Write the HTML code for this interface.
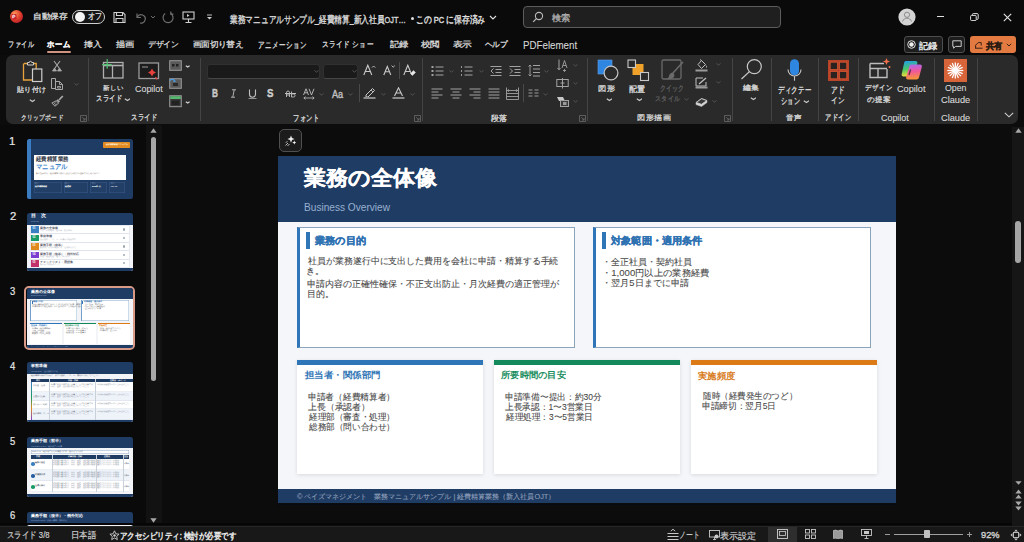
<!DOCTYPE html>
<html lang="ja"><head><meta charset="utf-8">
<style>
*{margin:0;padding:0;box-sizing:border-box}
html,body{width:1024px;height:542px;overflow:hidden;background:#0c0c0c;font-family:"Liberation Sans",sans-serif}
.a{position:absolute}
.m{position:absolute;white-space:nowrap;line-height:1;transform-origin:0 0}
</style></head><body>

<div class="a" style="left:0px;top:0px;width:1024px;height:55px;background:#0a0a0a;"></div>
<div class="a" style="left:0px;top:55px;width:1024px;height:472px;background:#0c0c0c;"></div>
<svg class="a" style="left:9px;top:9px" width="15" height="15" viewBox="0 0 15 15" fill="none"><defs><radialGradient id="pg" cx="0.35" cy="0.3" r="0.8"><stop offset="0" stop-color="#ff9a5a"/><stop offset="0.55" stop-color="#e0402a"/><stop offset="1" stop-color="#b0182a"/></radialGradient></defs>
<circle cx="7.5" cy="7.5" r="6.5" fill="url(#pg)"/><rect x="2.5" y="5" width="5" height="5.5" rx="0.8" fill="#c8202a"/><path d="M3.8 9.3V6.2h1.3a0.9 0.9 0 0 1 0 1.8H3.8" stroke="#fff" stroke-width="0.9"/></svg>
<div class="m" style="left:32.65px;top:13.30px;color:#d6d6d6;font-size:9px;font-weight:400;-webkit-text-stroke:0.38px #d6d6d6;transform:scale(0.9529,0.8750);">自動保存</div>
<div class="a" style="left:72px;top:9.5px;width:33px;height:14px;border:1.3px solid #cfcfcf;border-radius:7px;background:#151515"></div>
<div class="a" style="left:74.5px;top:11.5px;width:10px;height:10px;border-radius:50%;background:#f4f4f4"></div>
<div class="m" style="left:88.21px;top:12.30px;color:#d6d6d6;font-size:9px;font-weight:400;-webkit-text-stroke:0.38px #d6d6d6;transform:scaleX(0.7875);">オフ</div>
<svg class="a" style="left:113px;top:11px" width="13" height="13" viewBox="0 0 13 13" fill="none"><path d="M1 1.5h9l2 2v8H1z" stroke="#cfcfcf" stroke-width="1.1"/><path d="M3.5 1.5v3h6v-3M3 11.5V7.5h7v4" stroke="#cfcfcf" stroke-width="1.1"/></svg>
<svg class="a" style="left:134px;top:11px" width="12" height="13" viewBox="0 0 12 13" fill="none"><path d="M3 2.5v4h4" stroke="#6e6e6e" stroke-width="1.2"/><path d="M3.2 6.2A4.2 4.2 0 1 1 6 12" stroke="#6e6e6e" stroke-width="1.2"/></svg>
<svg class="a" style="left:149.5px;top:15px" width="6" height="4" viewBox="0 0 6 4" fill="none"><path d="M1 1l2 2 2-2" stroke="#6e6e6e" stroke-width="1"/></svg>
<svg class="a" style="left:160.5px;top:11px" width="14" height="13" viewBox="0 0 14 13" fill="none"><path d="M4.2 2.6A5 5 0 1 0 9.6 2.4" stroke="#6e6e6e" stroke-width="1.2"/><path d="M9.8 0.6v2.6h2.6" stroke="#6e6e6e" stroke-width="1.2"/></svg>
<svg class="a" style="left:182px;top:11px" width="13" height="13" viewBox="0 0 13 13" fill="none"><rect x="1" y="1" width="11" height="7" stroke="#cfcfcf" stroke-width="1.1"/><path d="M5 3v3l2.5-1.5z" fill="#cfcfcf"/><path d="M6.5 8v3M3.5 11.5h6" stroke="#cfcfcf" stroke-width="1.1"/></svg>
<svg class="a" style="left:205.5px;top:14px" width="7" height="6" viewBox="0 0 7 6" fill="none"><path d="M1 1h5" stroke="#cfcfcf" stroke-width="0.9"/><path d="M1 3l2.5 2.5L6 3z" fill="#cfcfcf"/></svg>
<div class="m" style="left:229.70px;top:15.00px;color:#d6d6d6;font-size:9.5px;font-weight:400;-webkit-text-stroke:0.38px #d6d6d6;transform:scaleX(0.7709);">業務マニュアルサンプル_経費精算_新入社員OJT…</div>
<div class="a" style="left:410.5px;top:16.5px;width:3px;height:3px;border-radius:50%;background:#e0e0e0"></div>
<div class="m" style="left:416.42px;top:15.00px;color:#e0e0e0;font-size:9.6px;font-weight:400;-webkit-text-stroke:0.38px #e0e0e0;transform:scaleX(0.7818);">この PC に保存済み</div>
<svg class="a" style="left:489px;top:15px" width="8" height="6" viewBox="0 0 8 6" fill="none"><path d="M1 1l3 3 3-3" stroke="#e0e0e0" stroke-width="1.1"/></svg>
<div class="a" style="left:523px;top:5.5px;width:258px;height:22.5px;border:1px solid #5c5c5c;border-radius:4px;background:#1f1f1f"></div>
<svg class="a" style="left:532px;top:11px" width="12" height="12" viewBox="0 0 12 12" fill="none"><circle cx="7" cy="5" r="3.6" stroke="#bdbdbd" stroke-width="1.1"/><path d="M4.4 7.6L1.2 10.8" stroke="#bdbdbd" stroke-width="1.2"/></svg>
<div class="m" style="left:552.00px;top:14.30px;color:#a8a8a8;font-size:9px;font-weight:400;-webkit-text-stroke:0.38px #a8a8a8;transform:scaleX(1.0167);">検索</div>
<svg class="a" style="left:898px;top:8px" width="18" height="18" viewBox="0 0 18 18" fill="none"><circle cx="9" cy="9" r="8.6" fill="#d4d4d4"/><circle cx="9" cy="6.8" r="2.6" stroke="#8a8a8a" stroke-width="1"/><path d="M4.5 13.5c0.8-2.2 2.4-3.3 4.5-3.3s3.7 1.1 4.5 3.3" stroke="#8a8a8a" stroke-width="1"/></svg>
<div class="a" style="left:936.5px;top:15.8px;width:7.5px;height:1px;background:#e0e0e0;"></div>
<svg class="a" style="left:969.5px;top:13px" width="9" height="8" viewBox="0 0 9 8" fill="none"><rect x="0.6" y="2.4" width="5.6" height="5.2" rx="1" stroke="#e0e0e0" stroke-width="1"/><path d="M2.4 2.2V1.6a1 1 0 0 1 1-1h3.8a1 1 0 0 1 1 1v3.8a1 1 0 0 1-1 1h-0.8" stroke="#e0e0e0" stroke-width="1"/></svg>
<svg class="a" style="left:1003px;top:13px" width="9" height="9" viewBox="0 0 9 9" fill="none"><path d="M0.8 0.8l7.4 7.4M8.2 0.8L0.8 8.2" stroke="#e6e6e6" stroke-width="1.1"/></svg>
<div class="m" style="left:8.25px;top:39.84px;color:#d6d6d6;font-size:9.8px;font-weight:400;-webkit-text-stroke:0.38px #d6d6d6;transform:scale(0.6513,0.8556);">ファイル</div>
<div class="m" style="left:84.40px;top:40.70px;color:#d6d6d6;font-size:9.8px;font-weight:400;-webkit-text-stroke:0.38px #d6d6d6;transform:scale(0.8600,0.7700);">挿入</div>
<div class="m" style="left:116.30px;top:40.70px;color:#d6d6d6;font-size:9.8px;font-weight:400;-webkit-text-stroke:0.38px #d6d6d6;transform:scale(0.8850,0.7700);">描画</div>
<div class="m" style="left:147.95px;top:40.70px;color:#d6d6d6;font-size:9.8px;font-weight:400;-webkit-text-stroke:0.38px #d6d6d6;transform:scale(0.7526,0.7700);">デザイン</div>
<div class="m" style="left:192.90px;top:40.70px;color:#d6d6d6;font-size:9.8px;font-weight:400;-webkit-text-stroke:0.38px #d6d6d6;transform:scale(0.8373,0.7700);">画面切り替え</div>
<div class="m" style="left:257.70px;top:39.74px;color:#d6d6d6;font-size:9.8px;font-weight:400;-webkit-text-stroke:0.38px #d6d6d6;transform:scale(0.6956,0.9625);">アニメーション</div>
<div class="m" style="left:322.19px;top:39.84px;color:#d6d6d6;font-size:9.8px;font-weight:400;-webkit-text-stroke:0.38px #d6d6d6;transform:scale(0.7099,0.8556);">スライド ショー</div>
<div class="m" style="left:389.70px;top:40.70px;color:#d6d6d6;font-size:9.8px;font-weight:400;-webkit-text-stroke:0.38px #d6d6d6;transform:scale(0.8900,0.7700);">記録</div>
<div class="m" style="left:420.80px;top:40.70px;color:#d6d6d6;font-size:9.8px;font-weight:400;-webkit-text-stroke:0.38px #d6d6d6;transform:scale(0.9100,0.7700);">校閲</div>
<div class="m" style="left:452.60px;top:40.70px;color:#d6d6d6;font-size:9.8px;font-weight:400;-webkit-text-stroke:0.38px #d6d6d6;transform:scale(0.9350,0.7700);">表示</div>
<div class="m" style="left:484.80px;top:41.47px;color:#d6d6d6;font-size:9.8px;font-weight:400;-webkit-text-stroke:0.38px #d6d6d6;transform:scale(0.7419,0.7700);">ヘルプ</div>
<div class="m" style="left:47.00px;top:39.84px;color:#f2f2f2;font-size:9.8px;font-weight:700;-webkit-text-stroke:0.38px #f2f2f2;transform:scale(0.7833,0.8556);">ホーム</div>
<div class="a" style="left:46.7px;top:51px;width:24.3px;height:2.2px;background:#cf9480;border-radius:1px"></div>
<div class="m" style="left:523.10px;top:39.90px;color:#d6d6d6;font-size:10.8px;font-weight:400;-webkit-text-stroke:0.1px #d6d6d6;transform:scaleX(0.9017);">PDFelement</div>
<div class="a" style="left:904px;top:35.5px;width:38.5px;height:17px;border:1px solid #4e4e4e;border-radius:3px;background:#1d1d1d"></div>
<svg class="a" style="left:907px;top:39.5px" width="9" height="9" viewBox="0 0 9 9" fill="none"><circle cx="4.5" cy="4.5" r="3.8" stroke="#e0e0e0" stroke-width="1"/><circle cx="4.5" cy="4.5" r="2.2" fill="#f0f0f0"/></svg>
<div class="m" style="left:919.30px;top:41.50px;color:#e6e6e6;font-size:9px;font-weight:400;-webkit-text-stroke:0.38px #e6e6e6;transform:scaleX(1.0222);">記録</div>
<div class="a" style="left:948px;top:35.5px;width:17px;height:17px;border:1px solid #4e4e4e;border-radius:3px;background:#1d1d1d"></div>
<svg class="a" style="left:951.5px;top:39.5px" width="10" height="9" viewBox="0 0 10 9" fill="none"><path d="M0.8 0.8h8.4v5.6H3.6L1.6 8.2V6.4H0.8z" stroke="#e0e0e0" stroke-width="0.9"/></svg>
<div class="a" style="left:970px;top:35.5px;width:46px;height:17px;border-radius:3px;background:#e37a42"></div>
<svg class="a" style="left:973.5px;top:39.5px" width="10" height="9" viewBox="0 0 10 9" fill="none"><path d="M1 8.2h7.6M1.6 8V5.2l2.6-2.6M4.2 2.6h3v3" stroke="#2a1a10" stroke-width="0.9"/></svg>
<div class="m" style="left:986.00px;top:41.50px;color:#2a1a10;font-size:9px;font-weight:700;-webkit-text-stroke:0.38px #2a1a10;transform:scaleX(0.9167);">共有</div>
<svg class="a" style="left:1006px;top:43px" width="6" height="4" viewBox="0 0 6 4" fill="none"><path d="M0.8 0.8l2.2 2.2 2.2-2.2" stroke="#2a1a10" stroke-width="0.9"/></svg>
<div class="a" style="left:5.5px;top:55px;width:1012.5px;height:68.5px;background:#2a2a2a;border-radius:7px"></div>
<div class="a" style="left:88.4px;top:57.6px;width:1px;height:63.9px;background:#444444;"></div>
<div class="a" style="left:199.5px;top:57.6px;width:1px;height:63.9px;background:#444444;"></div>
<div class="a" style="left:422.3px;top:57.6px;width:1px;height:63.9px;background:#444444;"></div>
<div class="a" style="left:587.3px;top:57.6px;width:1px;height:63.9px;background:#444444;"></div>
<div class="a" style="left:732.4px;top:57.6px;width:1px;height:63.9px;background:#444444;"></div>
<div class="a" style="left:770.7px;top:57.6px;width:1px;height:63.9px;background:#444444;"></div>
<div class="a" style="left:817.6px;top:57.6px;width:1px;height:63.9px;background:#444444;"></div>
<div class="a" style="left:857.7px;top:57.6px;width:1px;height:63.9px;background:#444444;"></div>
<div class="a" style="left:933.9px;top:57.6px;width:1px;height:63.9px;background:#444444;"></div>
<div class="a" style="left:976.8px;top:57.6px;width:1px;height:63.9px;background:#444444;"></div>
<div class="m" style="left:21.09px;top:114.35px;color:#d8d8d8;font-size:9.5px;font-weight:400;-webkit-text-stroke:0.38px #d8d8d8;transform:scale(0.6088,0.7500);">クリップボード</div>
<div class="m" style="left:131.34px;top:112.77px;color:#d8d8d8;font-size:9.5px;font-weight:400;-webkit-text-stroke:0.38px #d8d8d8;transform:scale(0.6632,0.8333);">スライド</div>
<div class="m" style="left:293.14px;top:112.66px;color:#d8d8d8;font-size:9.5px;font-weight:400;-webkit-text-stroke:0.38px #d8d8d8;transform:scale(0.6595,0.9375);">フォント</div>
<div class="m" style="left:491.40px;top:113.60px;color:#d8d8d8;font-size:9.5px;font-weight:400;-webkit-text-stroke:0.38px #d8d8d8;transform:scale(0.8300,0.8333);">段落</div>
<div class="m" style="left:636.84px;top:113.60px;color:#d8d8d8;font-size:9.5px;font-weight:400;-webkit-text-stroke:0.38px #d8d8d8;transform:scale(0.8641,0.7500);">図形描画</div>
<div class="m" style="left:786.40px;top:114.35px;color:#d8d8d8;font-size:9.5px;font-weight:400;-webkit-text-stroke:0.38px #d8d8d8;transform:scale(0.8050,0.7500);">音声</div>
<div class="m" style="left:824.54px;top:112.77px;color:#d8d8d8;font-size:9.5px;font-weight:400;-webkit-text-stroke:0.38px #d8d8d8;transform:scale(0.6553,0.8333);">アドイン</div>
<div class="m" style="left:881.29px;top:112.90px;color:#d8d8d8;font-size:9.8px;font-weight:400;-webkit-text-stroke:0.1px #d8d8d8;transform:scaleX(0.9100);">Copilot</div>
<div class="m" style="left:940.66px;top:112.90px;color:#d8d8d8;font-size:9.8px;font-weight:400;-webkit-text-stroke:0.1px #d8d8d8;transform:scaleX(0.9414);">Claude</div>
<svg class="a" style="left:80px;top:114.5px" width="7" height="7" viewBox="0 0 7 7" fill="none"><path d="M0.5 0.5h6v6h-6z" stroke="#6a6a6a" stroke-width="0.8"/><path d="M2.2 2.2l2.8 2.8M5 3v2h-2" stroke="#6a6a6a" stroke-width="0.8"/></svg>
<svg class="a" style="left:414px;top:114.5px" width="7" height="7" viewBox="0 0 7 7" fill="none"><path d="M0.5 0.5h6v6h-6z" stroke="#6a6a6a" stroke-width="0.8"/><path d="M2.2 2.2l2.8 2.8M5 3v2h-2" stroke="#6a6a6a" stroke-width="0.8"/></svg>
<svg class="a" style="left:578.5px;top:114.5px" width="7" height="7" viewBox="0 0 7 7" fill="none"><path d="M0.5 0.5h6v6h-6z" stroke="#6a6a6a" stroke-width="0.8"/><path d="M2.2 2.2l2.8 2.8M5 3v2h-2" stroke="#6a6a6a" stroke-width="0.8"/></svg>
<svg class="a" style="left:723.5px;top:114.5px" width="7" height="7" viewBox="0 0 7 7" fill="none"><path d="M0.5 0.5h6v6h-6z" stroke="#6a6a6a" stroke-width="0.8"/><path d="M2.2 2.2l2.8 2.8M5 3v2h-2" stroke="#6a6a6a" stroke-width="0.8"/></svg>
<svg class="a" style="left:22px;top:60px" width="22" height="23" viewBox="0 0 22 23" fill="none"><path d="M2 3.5h3.5M11 3.5h3.2v6" stroke="#e8a33d" stroke-width="1.3"/><path d="M1.5 3.5v16.5h8.5" stroke="#e8a33d" stroke-width="1.3"/>
<path d="M5.5 5V2.5h1.8a1.2 1.2 0 0 1 2.4 0h1.8V5z" stroke="#cfcfcf" stroke-width="1" fill="#2a2a2a"/>
<rect x="10.5" y="9" width="9.3" height="12.5" stroke="#cfcfcf" stroke-width="1.2" fill="#2a2a2a"/></svg>
<div class="m" style="left:16.50px;top:85.70px;color:#d8d8d8;font-size:9.5px;font-weight:400;-webkit-text-stroke:0.38px #d8d8d8;transform:scale(0.7462,0.7500);">貼り付け</div>
<svg class="a" style="left:28.8px;top:98.6px" width="6.5" height="4" viewBox="0 0 6.5 4" fill="none"><path d="M0.8 0.8l2.65 1.65l2.65 -1.65" stroke="#c8c8c8" stroke-width="1.25"/></svg>
<svg class="a" style="left:51px;top:60px" width="12" height="12" viewBox="0 0 12 12" fill="none"><path d="M3 1l5.5 7.5M9 1L3.5 8.5" stroke="#a8a8a8" stroke-width="1.1"/><path d="M1.5 11l2-3 2 3zM6.5 11l2-3 2 3z" fill="#a8a8a8" stroke="#a8a8a8" stroke-width="0.8"/></svg>
<svg class="a" style="left:51px;top:77px" width="13" height="14" viewBox="0 0 13 14" fill="none"><path d="M0.5 1.5h4v10h-4z" stroke="#a8a8a8" stroke-width="1"/><path d="M4.5 4.5h4l3 3v5h-7z" stroke="#a8a8a8" stroke-width="1" fill="#2a2a2a"/><path d="M8.5 4.5v3h3M6.5 9.5h3v1.5h-3z" stroke="#a8a8a8" stroke-width="0.9"/></svg>
<svg class="a" style="left:51px;top:95px" width="13" height="12" viewBox="0 0 13 12" fill="none"><path d="M11.8 1L8 5" stroke="#a8a8a8" stroke-width="1.8"/><path d="M6.8 4.2l2.2 2.2-1.4 1.4-2.2-2.2z" fill="#a8a8a8"/><path d="M5.2 5.8l2.4 2.4L4 11.2 0.8 8z" fill="#3a3a3a" stroke="#a8a8a8" stroke-width="1"/><path d="M2.4 9.6l2-2M3.8 10.4l1.6-1.6" stroke="#a8a8a8" stroke-width="0.7"/></svg>
<svg class="a" style="left:73.5px;top:83px" width="5" height="3" viewBox="0 0 5 3" fill="none"><path d="M0.5 0.5l2 1.6 2-1.6" stroke="#585858" stroke-width="0.9"/></svg>
<svg class="a" style="left:101px;top:57px" width="24" height="23" viewBox="0 0 24 23" fill="none"><rect x="2.5" y="5.5" width="19.5" height="15.5" stroke="#b0b0b0" stroke-width="1.3"/><path d="M2.5 8.5h19.5" stroke="#b0b0b0" stroke-width="1.6"/><path d="M11.5 8.5v12.5" stroke="#b0b0b0" stroke-width="1.3"/><path d="M6.2 2v9.7M1.1 7.6h9.7" stroke="#50c070" stroke-width="1.2"/></svg>
<div class="m" style="left:102.60px;top:85.25px;color:#d8d8d8;font-size:9.5px;font-weight:400;-webkit-text-stroke:0.38px #d8d8d8;transform:scale(0.7000,0.6545);">新しい</div>
<div class="m" style="left:96.34px;top:93.97px;color:#d8d8d8;font-size:9.5px;font-weight:400;-webkit-text-stroke:0.38px #d8d8d8;transform:scale(0.6579,0.8333);">スライド</div>
<svg class="a" style="left:123.5px;top:97.6px" width="6.5" height="4" viewBox="0 0 6.5 4" fill="none"><path d="M0.8 0.8l2.65 1.65l2.65 -1.65" stroke="#c8c8c8" stroke-width="1.25"/></svg>
<svg class="a" style="left:138px;top:62px" width="22" height="19" viewBox="0 0 22 19" fill="none"><rect x="1" y="1" width="19.5" height="15.5" stroke="#9a9a9a" stroke-width="1.3" fill="#1c1c1c"/><path d="M4 5h6" stroke="#9a9a9a" stroke-width="1"/>
<path d="M14 6.5l1.4 2.6 2.6 1.4-2.6 1.4-1.4 2.6-1.4-2.6-2.6-1.4 2.6-1.4z" fill="#e8403a"/><path d="M17.5 15l1.5 2.5" stroke="#e8403a" stroke-width="1.2"/></svg>
<div class="m" style="left:134.59px;top:84.20px;color:#d8d8d8;font-size:9.8px;font-weight:400;-webkit-text-stroke:0.1px #d8d8d8;transform:scaleX(0.9100);">Copilot</div>
<svg class="a" style="left:168.5px;top:59.5px" width="13" height="11" viewBox="0 0 13 11" fill="none"><rect x="0.7" y="0.7" width="11.6" height="9.6" stroke="#9a9a9a" stroke-width="1" fill="#5a5a5a"/><rect x="3" y="4" width="2.5" height="2.5" fill="#222"/><rect x="7" y="4" width="2.5" height="2.5" fill="#222"/></svg>
<svg class="a" style="left:185px;top:64.5px" width="5" height="4" viewBox="0 0 5 4" fill="none"><path d="M0.8 0.8l1.9 1.2l1.9 -1.2" stroke="#d0d0d0" stroke-width="1.25"/></svg>
<svg class="a" style="left:168.5px;top:77.5px" width="13" height="11" viewBox="0 0 13 11" fill="none"><rect x="0.7" y="0.7" width="11.6" height="9.6" stroke="#9a9a9a" stroke-width="1" fill="#5a5a5a"/><path d="M1 2.5a3 3 0 0 1 5 0.5M4.5 1.5l1.5 1.6-2 0.4" stroke="#4a9ae0" stroke-width="1.2"/><rect x="4" y="5" width="5" height="3" fill="#2a2a2a"/></svg>
<svg class="a" style="left:168.5px;top:95px" width="13" height="12.5" viewBox="0 0 13 12.5" fill="none"><rect x="0.7" y="0.7" width="11.6" height="11" stroke="#9a9a9a" stroke-width="1" fill="#3a3a3a"/><rect x="1.2" y="1.2" width="10.6" height="2.8" fill="#58b870"/><rect x="2.5" y="5.5" width="8" height="4.5" fill="#222"/></svg>
<svg class="a" style="left:185px;top:100.5px" width="5" height="4" viewBox="0 0 5 4" fill="none"><path d="M0.8 0.8l1.9 1.2l1.9 -1.2" stroke="#d0d0d0" stroke-width="1.25"/></svg>
<div class="a" style="left:207px;top:63.8px;width:112.5px;height:15px;background:#1a1a1a;border:1px solid #303030;border-bottom-color:#464646;border-radius:3px"></div>
<div class="a" style="left:322.5px;top:63.8px;width:35.5px;height:15px;background:#1a1a1a;border:1px solid #303030;border-bottom-color:#464646;border-radius:3px"></div>
<svg class="a" style="left:313.5px;top:70px" width="5" height="3" viewBox="0 0 5 3" fill="none"><path d="M0.5 0.5l2 1.6 2-1.6" stroke="#585858" stroke-width="0.9"/></svg>
<svg class="a" style="left:352px;top:70px" width="5" height="3" viewBox="0 0 5 3" fill="none"><path d="M0.5 0.5l2 1.6 2-1.6" stroke="#585858" stroke-width="0.9"/></svg>
<svg class="a" style="left:363px;top:64px" width="13" height="12" viewBox="0 0 13 12" fill="none"><path d="M0.8 11L4.8 1.2 8.8 11M2.3 7.5h5" stroke="#c8c8c8" stroke-width="1.1"/><path d="M9 3.6l1.6-1.6 1.6 1.6" stroke="#c8c8c8" stroke-width="0.9"/></svg>
<svg class="a" style="left:383px;top:64px" width="13" height="12" viewBox="0 0 13 12" fill="none"><path d="M0.8 11L4.3 2.5 7.8 11M2.2 7.8h4.2" stroke="#c8c8c8" stroke-width="1.1"/><path d="M8.6 1.6l1.6 1.6 1.6-1.6" stroke="#c8c8c8" stroke-width="0.9"/></svg>
<div class="a" style="left:398.6px;top:61.8px;width:1px;height:17.6px;background:#4a4a4a;"></div>
<svg class="a" style="left:402.5px;top:64px" width="13" height="13" viewBox="0 0 13 13" fill="none"><path d="M0.8 11L4.8 1.2 8.8 11M2.3 7.5h5" stroke="#c8c8c8" stroke-width="1.1"/><path d="M7.5 9.5l3-3 2 2-3 3z" fill="#e6e6e6" stroke="#c8c8c8" stroke-width="0.6"/></svg>
<div class="m" style="left:211.80px;top:88.80px;color:#c8c8c8;font-size:10.3px;font-weight:700;-webkit-text-stroke:0.38px #c8c8c8;transform:scaleX(0.8000);">B</div>
<svg class="a" style="left:229.5px;top:89px" width="7" height="9" viewBox="0 0 7 9" fill="none"><path d="M2 0.8h4M1 8.2h4M4.2 0.8L2.8 8.2" stroke="#b0b0b0" stroke-width="1"/></svg>
<svg class="a" style="left:247.5px;top:88.5px" width="9" height="10.5" viewBox="0 0 9 10.5" fill="none"><path d="M1.5 0.5v4.8a3 3 0 0 0 6 0V0.5" stroke="#c0c0c0" stroke-width="1.1"/><path d="M0.5 9.8h8" stroke="#c0c0c0" stroke-width="1"/></svg>
<div class="m" style="left:267.20px;top:87.80px;color:#d0d0d0;font-size:10.8px;font-weight:700;-webkit-text-stroke:0.38px #d0d0d0;transform:scaleX(0.9000);">S</div>
<svg class="a" style="left:283.5px;top:89px" width="13" height="9" viewBox="0 0 13 9" fill="none"><path d="M1 4.5h11" stroke="#c0c0c0" stroke-width="1"/><path d="M2.5 8V3.5a1.5 1.5 0 0 1 3 0V8M2.5 6h3" stroke="#c0c0c0" stroke-width="0.9"/><path d="M7.5 2.5v5.5h2a1.5 1.5 0 0 0 0-3h-2" stroke="#c0c0c0" stroke-width="0.9"/></svg>
<svg class="a" style="left:302.5px;top:88px" width="12" height="12" viewBox="0 0 12 12" fill="none"><path d="M0.5 7L3 0.8 5.5 7M1.5 4.8h3M6 0.8l2.5 6.2 2.5-6.2" stroke="#c0c0c0" stroke-width="0.9"/><path d="M0.8 10h10.4M2.5 8.6l-1.6 1.4 1.6 1.4M9.5 8.6l1.6 1.4-1.6 1.4" stroke="#c0c0c0" stroke-width="0.8"/></svg>
<svg class="a" style="left:318.5px;top:92.5px" width="5" height="3" viewBox="0 0 5 3" fill="none"><path d="M0.5 0.5l2 1.6 2-1.6" stroke="#585858" stroke-width="0.9"/></svg>
<div class="m" style="left:332.00px;top:89.50px;color:#c0c0c0;font-size:10.3px;font-weight:400;-webkit-text-stroke:0.38px #c0c0c0;transform:scaleX(0.8846);">Aa</div>
<svg class="a" style="left:347.5px;top:92.5px" width="5" height="3" viewBox="0 0 5 3" fill="none"><path d="M0.5 0.5l2 1.6 2-1.6" stroke="#585858" stroke-width="0.9"/></svg>
<div class="a" style="left:358.6px;top:84.3px;width:1px;height:17.5px;background:#4a4a4a;"></div>
<svg class="a" style="left:362.5px;top:87px" width="13" height="12" viewBox="0 0 13 12" fill="none"><path d="M3 8l6.5-6.5 2 2L5 10H3z" stroke="#c8c8c8" stroke-width="1"/><path d="M8 3l2 2" stroke="#c8c8c8" stroke-width="0.8"/><rect x="0.5" y="10" width="12" height="2" fill="#8a8a8a"/></svg>
<svg class="a" style="left:381px;top:92.5px" width="5" height="3" viewBox="0 0 5 3" fill="none"><path d="M0.5 0.5l2 1.6 2-1.6" stroke="#585858" stroke-width="0.9"/></svg>
<svg class="a" style="left:391.5px;top:87px" width="13" height="12" viewBox="0 0 13 12" fill="none"><path d="M2.5 9L6.5 0.8 10.5 9M4 6h5" stroke="#c8c8c8" stroke-width="1.1"/><rect x="0.5" y="10" width="12" height="2" fill="#8a8a8a"/></svg>
<svg class="a" style="left:410px;top:92.5px" width="5" height="3" viewBox="0 0 5 3" fill="none"><path d="M0.5 0.5l2 1.6 2-1.6" stroke="#585858" stroke-width="0.9"/></svg>
<svg class="a" style="left:430.5px;top:64.5px" width="13" height="12" viewBox="0 0 13 12" fill="none"><rect x="0.5" y="1" width="2" height="2" fill="#a2a2a2"/><path d="M4.5 2h8" stroke="#a2a2a2" stroke-width="1"/><rect x="0.5" y="5" width="2" height="2" fill="#a2a2a2"/><path d="M4.5 6h8" stroke="#a2a2a2" stroke-width="1"/><rect x="0.5" y="9" width="2" height="2" fill="#a2a2a2"/><path d="M4.5 10h8" stroke="#a2a2a2" stroke-width="1"/></svg>
<svg class="a" style="left:448.5px;top:69.5px" width="5" height="3" viewBox="0 0 5 3" fill="none"><path d="M0.5 0.5l2 1.6 2-1.6" stroke="#585858" stroke-width="0.9"/></svg>
<svg class="a" style="left:460px;top:64.5px" width="13" height="12" viewBox="0 0 13 12" fill="none"><path d="M1.5 1v2" stroke="#a2a2a2" stroke-width="0.9"/><path d="M4.5 2h8" stroke="#a2a2a2" stroke-width="1"/><path d="M1.5 5v2" stroke="#a2a2a2" stroke-width="0.9"/><path d="M4.5 6h8" stroke="#a2a2a2" stroke-width="1"/><path d="M1.5 9v2" stroke="#a2a2a2" stroke-width="0.9"/><path d="M4.5 10h8" stroke="#a2a2a2" stroke-width="1"/></svg>
<svg class="a" style="left:478.5px;top:69.5px" width="5" height="3" viewBox="0 0 5 3" fill="none"><path d="M0.5 0.5l2 1.6 2-1.6" stroke="#585858" stroke-width="0.9"/></svg>
<svg class="a" style="left:489.5px;top:64.5px" width="12" height="12" viewBox="0 0 12 12" fill="none"><path d="M0.5 1.5h11M5.5 4.5h6M5.5 7.5h6M0.5 10.5h11" stroke="#a2a2a2" stroke-width="1"/><path d="M3.5 3.5L1 6l2.5 2.5" stroke="#a2a2a2" stroke-width="1"/></svg>
<svg class="a" style="left:508.5px;top:64.5px" width="12" height="12" viewBox="0 0 12 12" fill="none"><path d="M0.5 1.5h11M5.5 4.5h6M5.5 7.5h6M0.5 10.5h11" stroke="#a2a2a2" stroke-width="1"/><path d="M1 3.5L3.5 6 1 8.5" stroke="#a2a2a2" stroke-width="1"/></svg>
<svg class="a" style="left:527.5px;top:64px" width="12" height="13" viewBox="0 0 12 13" fill="none"><path d="M5 1.5h7M5 5h7M5 8.5h7M5 12h7" stroke="#a2a2a2" stroke-width="1"/><path d="M2 1v11M0.5 2.5L2 1l1.5 1.5M0.5 10.5L2 12l1.5-1.5" stroke="#a2a2a2" stroke-width="0.9"/></svg>
<svg class="a" style="left:544px;top:69.5px" width="5" height="3" viewBox="0 0 5 3" fill="none"><path d="M0.5 0.5l2 1.6 2-1.6" stroke="#585858" stroke-width="0.9"/></svg>
<svg class="a" style="left:557px;top:58.5px" width="11" height="13" viewBox="0 0 11 13" fill="none"><path d="M2 0.5v10M0.5 9l1.5 1.8L3.5 9" stroke="#a2a2a2" stroke-width="1"/><path d="M5 9L7.5 1.5 10 9M6 6.5h3" stroke="#a2a2a2" stroke-width="0.9"/><path d="M7.5 10v2.5M6 11l1.5 1.5L9 11" stroke="#a2a2a2" stroke-width="0.9"/></svg>
<svg class="a" style="left:573px;top:64px" width="5" height="3" viewBox="0 0 5 3" fill="none"><path d="M0.5 0.5l2 1.6 2-1.6" stroke="#585858" stroke-width="0.9"/></svg>
<svg class="a" style="left:430.5px;top:87.5px" width="12" height="11" viewBox="0 0 12 11" fill="none"><path d="M0.5 1h11M0.5 4h7M0.5 7h11M0.5 10h7" stroke="#a2a2a2" stroke-width="1"/></svg>
<svg class="a" style="left:450px;top:87.5px" width="12" height="11" viewBox="0 0 12 11" fill="none"><path d="M0.5 1h11M2.5 4h7M0.5 7h11M2.5 10h7" stroke="#a2a2a2" stroke-width="1"/></svg>
<svg class="a" style="left:468.5px;top:87.5px" width="12" height="11" viewBox="0 0 12 11" fill="none"><path d="M0.5 1h11M4.5 4h7M0.5 7h11M4.5 10h7" stroke="#a2a2a2" stroke-width="1"/></svg>
<svg class="a" style="left:487.5px;top:87.5px" width="12" height="11" viewBox="0 0 12 11" fill="none"><path d="M0.5 1h11M0.5 4h11M0.5 7h11M0.5 10h11" stroke="#a2a2a2" stroke-width="1"/></svg>
<svg class="a" style="left:505.5px;top:86.5px" width="13" height="13" viewBox="0 0 13 13" fill="none"><path d="M0.5 0.5v12M12.5 0.5v12M0.5 3.5h12M0.5 6.5h12M0.5 9.5h12M0.5 12.5h12" stroke="#a2a2a2" stroke-width="0.9"/><path d="M3 2l-1.5 1.5L3 5M10 2l1.5 1.5L10 5" stroke="#a2a2a2" stroke-width="0.7"/></svg>
<div class="a" style="left:523.3px;top:84.4px;width:1px;height:17.4px;background:#4a4a4a;"></div>
<svg class="a" style="left:528px;top:89px" width="11" height="8" viewBox="0 0 11 8" fill="none"><path d="M0.5 1h4M0.5 4h4M0.5 7h4M6.5 1h4M6.5 4h4M6.5 7h4" stroke="#9a9a9a" stroke-width="1"/></svg>
<svg class="a" style="left:543px;top:92.5px" width="5" height="3" viewBox="0 0 5 3" fill="none"><path d="M0.5 0.5l2 1.6 2-1.6" stroke="#585858" stroke-width="0.9"/></svg>
<svg class="a" style="left:555.5px;top:78px" width="13" height="11" viewBox="0 0 13 11" fill="none"><rect x="0.8" y="1.5" width="11.4" height="7" stroke="#a2a2a2" stroke-width="1"/><path d="M6.5 0v10.5M4.5 5h4" stroke="#a2a2a2" stroke-width="1"/></svg>
<svg class="a" style="left:573px;top:82px" width="5" height="3" viewBox="0 0 5 3" fill="none"><path d="M0.5 0.5l2 1.6 2-1.6" stroke="#585858" stroke-width="0.9"/></svg>
<svg class="a" style="left:556px;top:96px" width="13" height="11" viewBox="0 0 13 11" fill="none"><path d="M1 1h6l2 4H3z" fill="#c8c8c8"/><rect x="4.5" y="4.5" width="8" height="6" stroke="#a2a2a2" stroke-width="1" fill="#3a3a3a"/><rect x="7" y="6" width="3.5" height="3" fill="#9a9a9a"/></svg>
<svg class="a" style="left:573px;top:100px" width="5" height="3" viewBox="0 0 5 3" fill="none"><path d="M0.5 0.5l2 1.6 2-1.6" stroke="#585858" stroke-width="0.9"/></svg>
<svg class="a" style="left:596.5px;top:59px" width="22" height="22" viewBox="0 0 22 22" fill="none"><rect x="1" y="1" width="14" height="14" fill="#2f86e0"/><rect x="1" y="1" width="14" height="14" stroke="#5aa0ea" stroke-width="0.6"/><circle cx="14" cy="14" r="6.9" fill="#2a2a2a" stroke="#c8c8c8" stroke-width="1.2"/></svg>
<div class="m" style="left:598.12px;top:85.00px;color:#d8d8d8;font-size:9.5px;font-weight:400;-webkit-text-stroke:0.38px #d8d8d8;transform:scale(0.8842,0.7500);">図形</div>
<svg class="a" style="left:605.8px;top:98px" width="6.5" height="4" viewBox="0 0 6.5 4" fill="none"><path d="M0.8 0.8l2.65 1.65l2.65 -1.65" stroke="#c8c8c8" stroke-width="1.25"/></svg>
<svg class="a" style="left:626.5px;top:59px" width="23" height="23" viewBox="0 0 23 23" fill="none"><rect x="5.5" y="5" width="11" height="11" fill="#f0a12a"/><rect x="1" y="1" width="7.5" height="7.5" fill="#2a2a2a" stroke="#c8c8c8" stroke-width="1.1"/><rect x="13.5" y="13.5" width="8" height="8" fill="#2a2a2a" stroke="#c8c8c8" stroke-width="1.1"/></svg>
<div class="m" style="left:629.00px;top:85.00px;color:#d8d8d8;font-size:9.5px;font-weight:400;-webkit-text-stroke:0.38px #d8d8d8;transform:scale(0.8400,0.8333);">配置</div>
<svg class="a" style="left:635.8px;top:98px" width="6.5" height="4" viewBox="0 0 6.5 4" fill="none"><path d="M0.8 0.8l2.65 1.65l2.65 -1.65" stroke="#c8c8c8" stroke-width="1.25"/></svg>
<svg class="a" style="left:661px;top:59px" width="24" height="23" viewBox="0 0 24 23" fill="none"><rect x="1" y="1" width="19" height="19" rx="1.5" stroke="#6a6a6a" stroke-width="1.3"/><path d="M22 3L12 14" stroke="#6a6a6a" stroke-width="1.6"/><path d="M12 13.5c-2 0-3.5 1.2-4 3.5-0.3 1.5-1 2.5-2.5 3 2.5 0.5 6 0 7.5-2 0.8-1.2 0.5-3-1-4.5z" fill="#6a6a6a"/></svg>
<div class="m" style="left:659.79px;top:84.17px;color:#5e5e5e;font-size:9.5px;font-weight:400;-webkit-text-stroke:0.38px #5e5e5e;transform:scale(0.6108,0.8333);">クイック</div>
<div class="m" style="left:655.36px;top:95.20px;color:#5e5e5e;font-size:9.5px;font-weight:400;-webkit-text-stroke:0.38px #5e5e5e;transform:scale(0.6410,0.7500);">スタイル</div>
<svg class="a" style="left:684px;top:98px" width="5" height="3" viewBox="0 0 5 3" fill="none"><path d="M0.5 0.5l2 1.6 2-1.6" stroke="#585858" stroke-width="0.9"/></svg>
<svg class="a" style="left:694.5px;top:59px" width="13" height="13" viewBox="0 0 13 13" fill="none"><path d="M3 5.5L6.5 1.5 10.5 5.5 6.5 9.5z" stroke="#c0c0c0" stroke-width="1"/><path d="M5 0.5l1.5 1" stroke="#c0c0c0" stroke-width="0.9"/><path d="M11 6.5c0.8 1 0.8 1.8 0 2.2" stroke="#c0c0c0" stroke-width="0.9"/><rect x="0.5" y="10.5" width="12" height="2" fill="#9a9a9a"/></svg>
<svg class="a" style="left:716px;top:63px" width="5" height="3" viewBox="0 0 5 3" fill="none"><path d="M0.5 0.5l2 1.6 2-1.6" stroke="#585858" stroke-width="0.9"/></svg>
<svg class="a" style="left:694.5px;top:77px" width="13" height="12" viewBox="0 0 13 12" fill="none"><path d="M1 1h7M1 1v8h10V5" stroke="#c0c0c0" stroke-width="1"/><path d="M4 7l7-6" stroke="#c0c0c0" stroke-width="1.3"/><rect x="0.5" y="9.5" width="12" height="2" fill="#9a9a9a"/></svg>
<svg class="a" style="left:716px;top:81px" width="5" height="3" viewBox="0 0 5 3" fill="none"><path d="M0.5 0.5l2 1.6 2-1.6" stroke="#585858" stroke-width="0.9"/></svg>
<svg class="a" style="left:694.5px;top:95.5px" width="13" height="11" viewBox="0 0 13 11" fill="none"><path d="M1 6.5L6.5 2.5 12 4.5 12 6.5 6.5 10.5 1 8.5z" fill="#d8d8d8" stroke="#bdbdbd" stroke-width="0.6"/><path d="M1.2 6.5L6.5 2.7 11.8 4.5 6.5 8.3z" fill="#3a3a3a" stroke="#d0d0d0" stroke-width="0.8"/></svg>
<svg class="a" style="left:711.5px;top:100px" width="5" height="3" viewBox="0 0 5 3" fill="none"><path d="M0.5 0.5l2 1.6 2-1.6" stroke="#585858" stroke-width="0.9"/></svg>
<svg class="a" style="left:740px;top:58px" width="24" height="22" viewBox="0 0 24 22" fill="none"><circle cx="14.3" cy="8.6" r="7" stroke="#c8c8c8" stroke-width="1.2"/><path d="M9.4 13.6L1.5 21" stroke="#c8c8c8" stroke-width="1.3"/></svg>
<div class="m" style="left:743.20px;top:83.50px;color:#d8d8d8;font-size:9.5px;font-weight:400;-webkit-text-stroke:0.38px #d8d8d8;transform:scale(0.8400,0.7500);">編集</div>
<svg class="a" style="left:749.5px;top:97.3px" width="6.5" height="4" viewBox="0 0 6.5 4" fill="none"><path d="M0.8 0.8l2.65 1.65l2.65 -1.65" stroke="#c8c8c8" stroke-width="1.25"/></svg>
<svg class="a" style="left:786px;top:58px" width="17" height="24" viewBox="0 0 17 24" fill="none"><rect x="4" y="1.2" width="9" height="16" rx="4.5" fill="#2f86e0"/><path d="M2 11.5a6.5 6.5 0 0 0 13 0" stroke="#c8c8c8" stroke-width="1.1"/><path d="M8.5 18.2v4.5" stroke="#c8c8c8" stroke-width="1.1"/></svg>
<div class="m" style="left:777.63px;top:84.76px;color:#d8d8d8;font-size:9.5px;font-weight:400;-webkit-text-stroke:0.38px #d8d8d8;transform:scale(0.6729,0.9375);">ディクテー</div>
<div class="m" style="left:780.66px;top:95.76px;color:#d8d8d8;font-size:9.5px;font-weight:400;-webkit-text-stroke:0.38px #d8d8d8;transform:scale(0.6429,0.9375);">ション</div>
<svg class="a" style="left:802.5px;top:99.5px" width="6.5" height="4" viewBox="0 0 6.5 4" fill="none"><path d="M0.8 0.8l2.65 1.65l2.65 -1.65" stroke="#c8c8c8" stroke-width="1.25"/></svg>
<svg class="a" style="left:827.5px;top:59.5px" width="21" height="21" viewBox="0 0 21 21" fill="none"><rect x="0" y="0" width="21" height="21" fill="#b8442a"/><rect x="2.2" y="2.2" width="7.3" height="7.3" fill="#2a2220" stroke="#d8552f" stroke-width="0.8"/><rect x="11.5" y="2.2" width="7.3" height="7.3" fill="#2a2220" stroke="#d8552f" stroke-width="0.8"/><rect x="2.2" y="11.5" width="7.3" height="7.3" fill="#2a2220" stroke="#d8552f" stroke-width="0.8"/><rect x="11.5" y="11.5" width="7.3" height="7.3" fill="#2a2220" stroke="#d8552f" stroke-width="0.8"/></svg>
<div class="m" style="left:831.11px;top:84.76px;color:#d8d8d8;font-size:9.5px;font-weight:400;-webkit-text-stroke:0.38px #d8d8d8;transform:scale(0.6944,0.9375);">アド</div>
<div class="m" style="left:831.11px;top:95.87px;color:#d8d8d8;font-size:9.5px;font-weight:400;-webkit-text-stroke:0.38px #d8d8d8;transform:scale(0.6944,0.8333);">イン</div>
<svg class="a" style="left:868px;top:57px" width="24" height="22" viewBox="0 0 24 22" fill="none"><path d="M2 6.5h14M2 6.5v14h17V12M2 11.5h17M10 11.5v9" stroke="#bdbdbd" stroke-width="1.4"/><path d="M18.5 1l1 2.5 2.5 1-2.5 1-1 2.5-1-2.5-2.5-1 2.5-1z" fill="#f0704a"/><circle cx="21.5" cy="10" r="1" fill="#f0704a"/></svg>
<div class="m" style="left:865.01px;top:84.20px;color:#d8d8d8;font-size:9.5px;font-weight:400;-webkit-text-stroke:0.38px #d8d8d8;transform:scale(0.6921,0.7500);">デザイン</div>
<div class="m" style="left:866.60px;top:95.73px;color:#d8d8d8;font-size:9.5px;font-weight:400;-webkit-text-stroke:0.38px #d8d8d8;transform:scale(0.7967,0.7273);">の提案</div>
<svg class="a" style="left:901px;top:60px" width="22" height="21" viewBox="0 0 22 21" fill="none"><defs><linearGradient id="cpa" x1="0" y1="0" x2="0.2" y2="1"><stop offset="0" stop-color="#1e9af5"/><stop offset="0.55" stop-color="#48c868"/><stop offset="1" stop-color="#f2dc38"/></linearGradient>
<linearGradient id="cpb" x1="0" y1="0" x2="0.1" y2="1"><stop offset="0" stop-color="#a86af4"/><stop offset="0.5" stop-color="#f0589a"/><stop offset="1" stop-color="#f8943a"/></linearGradient></defs>
<path d="M5 1h9.5c1.6 0 2.2 1 1.8 2.4L13 14.5c-0.4 1.3-1.2 2-2.5 2H2.5c-1.5 0-2.2-1-1.8-2.4L3.2 2.6C3.5 1.6 4 1 5 1z" fill="url(#cpa)"/>
<path d="M10.5 4.5h8.5c1.5 0 2.2 1 1.8 2.4L18 17.5c-0.4 1.3-1.2 2-2.5 2H7c-1.5 0-2.2-1-1.8-2.4l3.2-11C8.8 5.2 9.5 4.5 10.5 4.5z" fill="url(#cpb)"/>
<path d="M9.6 9.5L8 15" stroke="#1a1a1a" stroke-width="1.2" opacity="0.7"/></svg>
<div class="m" style="left:897.07px;top:84.20px;color:#d8d8d8;font-size:9.8px;font-weight:400;-webkit-text-stroke:0.1px #d8d8d8;transform:scaleX(0.9333);">Copilot</div>
<svg class="a" style="left:944px;top:59px" width="23" height="23" viewBox="0 0 23 23" fill="none"><rect x="0" y="0" width="23" height="23" fill="#d8643a"/><path d="M11.3 11.5L19.30 11.50" stroke="#fff" stroke-width="1.3"/><path d="M11.3 11.5L18.69 14.56" stroke="#fff" stroke-width="1.3"/><path d="M11.3 11.5L16.96 17.16" stroke="#fff" stroke-width="1.3"/><path d="M11.3 11.5L14.36 18.89" stroke="#fff" stroke-width="1.3"/><path d="M11.3 11.5L11.30 19.50" stroke="#fff" stroke-width="1.3"/><path d="M11.3 11.5L8.24 18.89" stroke="#fff" stroke-width="1.3"/><path d="M11.3 11.5L5.64 17.16" stroke="#fff" stroke-width="1.3"/><path d="M11.3 11.5L3.91 14.56" stroke="#fff" stroke-width="1.3"/><path d="M11.3 11.5L3.30 11.50" stroke="#fff" stroke-width="1.3"/><path d="M11.3 11.5L3.91 8.44" stroke="#fff" stroke-width="1.3"/><path d="M11.3 11.5L5.64 5.84" stroke="#fff" stroke-width="1.3"/><path d="M11.3 11.5L8.24 4.11" stroke="#fff" stroke-width="1.3"/><path d="M11.3 11.5L11.30 3.50" stroke="#fff" stroke-width="1.3"/><path d="M11.3 11.5L14.36 4.11" stroke="#fff" stroke-width="1.3"/><path d="M11.3 11.5L16.96 5.84" stroke="#fff" stroke-width="1.3"/><path d="M11.3 11.5L18.69 8.44" stroke="#fff" stroke-width="1.3"/><circle cx="11.3" cy="11.5" r="2" fill="#fff"/></svg>
<div class="m" style="left:945.00px;top:83.20px;color:#d8d8d8;font-size:9.8px;font-weight:400;-webkit-text-stroke:0.1px #d8d8d8;transform:scaleX(0.8957);">Open</div>
<div class="m" style="left:940.66px;top:94.50px;color:#d8d8d8;font-size:9.8px;font-weight:400;-webkit-text-stroke:0.1px #d8d8d8;transform:scaleX(0.9414);">Claude</div>
<svg class="a" style="left:1003.5px;top:112px" width="10" height="6" viewBox="0 0 10 6" fill="none"><path d="M0.8 0.8l4.2 4 4.2-4" stroke="#d0d0d0" stroke-width="1.1"/></svg>
<div class="a" style="left:0px;top:124.5px;width:146px;height:399px;background:#0a0a0a;"></div>
<div class="a" style="left:146px;top:124.5px;width:16px;height:399px;background:#121212;"></div>
<svg class="a" style="left:150px;top:128px" width="7" height="5" viewBox="0 0 7 5" fill="none"><path d="M0.3 4.7L3.5 0.3 6.7 4.7z" fill="#a8a8a8"/></svg>
<div class="a" style="left:150.7px;top:136.8px;width:5.8px;height:244px;border-radius:3px;background:#a6a6a6"></div>
<svg class="a" style="left:150px;top:518px" width="7" height="5" viewBox="0 0 7 5" fill="none"><path d="M0.3 0.3L3.5 4.7 6.7 0.3z" fill="#a8a8a8"/></svg>
<div class="m" style="left:8.72px;top:136.10px;color:#e6e6e6;font-size:10.5px;font-weight:400;-webkit-text-stroke:0.2px #e6e6e6;transform:scaleX(1.0800);">1</div>
<div class="m" style="left:9.80px;top:211.10px;color:#e6e6e6;font-size:10.5px;font-weight:400;-webkit-text-stroke:0.2px #e6e6e6;transform:scaleX(1.0800);">2</div>
<div class="m" style="left:9.80px;top:286.20px;color:#e6e6e6;font-size:10.5px;font-weight:400;-webkit-text-stroke:0.2px #e6e6e6;transform:scaleX(0.9000);">3</div>
<div class="m" style="left:9.80px;top:360.50px;color:#e6e6e6;font-size:10.5px;font-weight:400;-webkit-text-stroke:0.2px #e6e6e6;transform:scaleX(0.9000);">4</div>
<div class="m" style="left:9.80px;top:436.10px;color:#e6e6e6;font-size:10.5px;font-weight:400;-webkit-text-stroke:0.2px #e6e6e6;transform:scaleX(0.9000);">5</div>
<div class="m" style="left:9.80px;top:509.90px;color:#e6e6e6;font-size:10.5px;font-weight:400;-webkit-text-stroke:0.2px #e6e6e6;transform:scaleX(0.9000);">6</div>
<div class="a" style="left:26.6px;top:138.5px;width:106.4px;height:60px;background:#1f3c64;border-radius:2.5px;overflow:hidden"><div class="a" style="left:0.50px;top:0.00px;width:3.60px;height:60.00px;background:#3b7cc0;"></div><div class="a" style="left:76.60px;top:3.40px;width:26.50px;height:5.90px;background:#e28b20;border-radius:0.8px"></div><div class="a" style="left:79.40px;top:5.30px;font-size:1.8px;line-height:1;white-space:nowrap;color:#fff3e0;font-weight:700;">経費精算業務マニュアル</div><div class="a" style="left:7.10px;top:16.40px;width:92.50px;height:24.80px;background:#ffffff;"></div><div class="a" style="left:9.60px;top:17.70px;font-size:6.4px;line-height:1;white-space:nowrap;color:#3c4450;font-weight:700;transform:scaleX(0.9);transform-origin:0 0;">経費精算業務</div><div class="a" style="left:9.60px;top:25.10px;font-size:6.5px;line-height:1;white-space:nowrap;color:#3a82c8;font-weight:700;transform:scaleX(0.9);transform-origin:0 0;">マニュアル</div><div class="a" style="left:9.60px;top:33.70px;font-size:2.1px;line-height:1;white-space:nowrap;color:#8a7a70;font-weight:400;">新入社員向け・経費精算の流れと必要な手続きを理解するためのガイド</div><div class="a" style="left:7.40px;top:43.50px;width:27.80px;height:10.70px;background:#223f68;box-shadow:inset 0 0 0 0.5px #3a5a88"></div><div class="a" style="left:8.90px;top:44.10px;font-size:1.5px;line-height:1;white-space:nowrap;color:#9ab0d0;font-weight:400;">項目</div><div class="a" style="left:8.90px;top:46.80px;font-size:2px;line-height:1;white-space:nowrap;color:#ffffff;font-weight:700;">経費精算業務</div><div class="a" style="left:37.00px;top:43.50px;width:24.80px;height:10.70px;background:#223f68;box-shadow:inset 0 0 0 0.5px #3a5a88"></div><div class="a" style="left:38.50px;top:44.10px;font-size:1.5px;line-height:1;white-space:nowrap;color:#9ab0d0;font-weight:400;">項目</div><div class="a" style="left:38.50px;top:46.80px;font-size:2px;line-height:1;white-space:nowrap;color:#ffffff;font-weight:700;">経理部</div><div class="a" style="left:63.60px;top:43.50px;width:17.10px;height:10.70px;background:#223f68;box-shadow:inset 0 0 0 0.5px #3a5a88"></div><div class="a" style="left:65.10px;top:44.10px;font-size:1.5px;line-height:1;white-space:nowrap;color:#9ab0d0;font-weight:400;">項目</div><div class="a" style="left:65.10px;top:46.80px;font-size:2px;line-height:1;white-space:nowrap;color:#ffffff;font-weight:700;">2025年4月</div><div class="a" style="left:82.70px;top:43.50px;width:16.10px;height:10.70px;background:#223f68;box-shadow:inset 0 0 0 0.5px #3a5a88"></div><div class="a" style="left:84.20px;top:44.10px;font-size:1.5px;line-height:1;white-space:nowrap;color:#9ab0d0;font-weight:400;">項目</div><div class="a" style="left:84.20px;top:46.80px;font-size:2px;line-height:1;white-space:nowrap;color:#ffffff;font-weight:700;">Ver 1.0</div></div>
<div class="a" style="left:26.6px;top:213px;width:106.4px;height:58px;background:#1f3c64;border-radius:2.5px;overflow:hidden"><div class="a" style="left:0.00px;top:11.60px;width:106.40px;height:47.00px;background:#f2f4f8;"></div><div class="a" style="left:4.10px;top:1.40px;font-size:4.8px;line-height:1;white-space:nowrap;color:#ffffff;font-weight:700;">目　次</div><div class="a" style="left:4.10px;top:7.30px;font-size:2px;line-height:1;white-space:nowrap;color:#8ea7c9;font-weight:400;">Contents</div><div class="a" style="left:4.10px;top:12.80px;width:98.00px;height:7.30px;background:#ffffff;box-shadow:0 0 0 0.4px #d6dde6"></div><div class="a" style="left:4.70px;top:13.10px;width:7.90px;height:6.70px;background:#3a7fc1;"></div><div class="a" style="left:6.00px;top:15.10px;font-size:2.6px;line-height:1;white-space:nowrap;color:#ffffff;font-weight:700;">01</div><div class="a" style="left:13.80px;top:13.90px;font-size:2.8px;line-height:1;white-space:nowrap;color:#5a6270;font-weight:700;">業務の全体像</div><div class="a" style="left:13.80px;top:17.20px;font-size:1.9px;line-height:1;white-space:nowrap;color:#b0b6c0;font-weight:400;">目的・対象範囲・担当者・所要時間</div><div class="a" style="left:96.40px;top:15.20px;width:2.40px;height:2.40px;background:#a0a8b4;border-radius:50%"></div><div class="a" style="left:4.10px;top:21.30px;width:98.00px;height:7.30px;background:#ffffff;box-shadow:0 0 0 0.4px #d6dde6"></div><div class="a" style="left:4.70px;top:21.60px;width:7.90px;height:6.70px;background:#1a9a66;"></div><div class="a" style="left:6.00px;top:23.60px;font-size:2.6px;line-height:1;white-space:nowrap;color:#ffffff;font-weight:700;">02</div><div class="a" style="left:13.80px;top:22.40px;font-size:2.8px;line-height:1;white-space:nowrap;color:#5a6270;font-weight:700;">事前準備</div><div class="a" style="left:13.80px;top:25.70px;font-size:1.9px;line-height:1;white-space:nowrap;color:#b0b6c0;font-weight:400;">必要書類・システム・申請前の確認事項</div><div class="a" style="left:96.40px;top:23.70px;width:2.40px;height:2.40px;background:#a0a8b4;border-radius:50%"></div><div class="a" style="left:4.10px;top:29.90px;width:98.00px;height:7.30px;background:#ffffff;box-shadow:0 0 0 0.4px #d6dde6"></div><div class="a" style="left:4.70px;top:30.20px;width:7.90px;height:6.70px;background:#e08a1e;"></div><div class="a" style="left:6.00px;top:32.20px;font-size:2.6px;line-height:1;white-space:nowrap;color:#ffffff;font-weight:700;">03</div><div class="a" style="left:13.80px;top:31.00px;font-size:2.8px;line-height:1;white-space:nowrap;color:#5a6270;font-weight:700;">業務手順（前半）</div><div class="a" style="left:13.80px;top:34.30px;font-size:1.9px;line-height:1;white-space:nowrap;color:#b0b6c0;font-weight:400;">経費発生から申請書作成・証憑添付まで</div><div class="a" style="left:96.40px;top:32.30px;width:2.40px;height:2.40px;background:#a0a8b4;border-radius:50%"></div><div class="a" style="left:4.10px;top:38.40px;width:98.00px;height:7.30px;background:#ffffff;box-shadow:0 0 0 0.4px #d6dde6"></div><div class="a" style="left:4.70px;top:38.70px;width:7.90px;height:6.70px;background:#7a3fd0;"></div><div class="a" style="left:6.00px;top:40.70px;font-size:2.6px;line-height:1;white-space:nowrap;color:#ffffff;font-weight:700;">04</div><div class="a" style="left:13.80px;top:39.50px;font-size:2.8px;line-height:1;white-space:nowrap;color:#5a6270;font-weight:700;">業務手順（後半）・例外対応</div><div class="a" style="left:13.80px;top:42.80px;font-size:1.9px;line-height:1;white-space:nowrap;color:#b0b6c0;font-weight:400;">承認・経理処理・差戻し時の対応</div><div class="a" style="left:96.40px;top:40.80px;width:2.40px;height:2.40px;background:#a0a8b4;border-radius:50%"></div><div class="a" style="left:4.10px;top:46.70px;width:98.00px;height:7.30px;background:#ffffff;box-shadow:0 0 0 0.4px #d6dde6"></div><div class="a" style="left:4.70px;top:47.00px;width:7.90px;height:6.70px;background:#c0306a;"></div><div class="a" style="left:6.00px;top:49.00px;font-size:2.6px;line-height:1;white-space:nowrap;color:#ffffff;font-weight:700;">05</div><div class="a" style="left:13.80px;top:47.80px;font-size:2.8px;line-height:1;white-space:nowrap;color:#5a6270;font-weight:700;">チェックリスト・用語集</div><div class="a" style="left:13.80px;top:51.10px;font-size:1.9px;line-height:1;white-space:nowrap;color:#b0b6c0;font-weight:400;">提出前の確認ポイント</div><div class="a" style="left:96.40px;top:49.10px;width:2.40px;height:2.40px;background:#a0a8b4;border-radius:50%"></div><div class="a" style="left:0.00px;top:55.20px;width:106.40px;height:3.80px;background:#1f3c64;"></div></div>
<div class="a" style="left:24.2px;top:286.1px;width:111.2px;height:64px;border:2px solid #d99a88;border-radius:5px"></div>
<div class="a" style="left:26.6px;top:288px;width:106.4px;height:60px;background:#1f3c64;border-radius:2.5px;overflow:hidden"><div class="a" style="left:0.00px;top:11.40px;width:106.40px;height:48.60px;background:#f2f4f8;"></div><div class="a" style="left:4.40px;top:1.50px;font-size:4px;line-height:1;white-space:nowrap;color:#ffffff;font-weight:700;">業務の全体像</div><div class="a" style="left:4.40px;top:7.20px;font-size:1.8px;line-height:1;white-space:nowrap;color:#8ea7c9;font-weight:400;">Business Overview</div><div class="a" style="left:3.50px;top:12.20px;width:47.30px;height:21.00px;background:#ffffff;box-shadow:inset 0 0 0 0.4px #7ea5c8,inset 0.7px 0 0 #2f76b8"></div><div class="a" style="left:5.10px;top:13.00px;width:0.70px;height:3.00px;background:#2f76b8;"></div><div class="a" style="left:6.50px;top:13.30px;font-size:1.8px;line-height:1;white-space:nowrap;color:#2f6fae;font-weight:700;">業務の目的</div><div class="a" style="left:5.20px;top:16.40px;font-size:1.6px;line-height:1;white-space:nowrap;color:#777;font-weight:400;">社員が業務遂行中に支出した費用を会社に申請・精算する手続き。</div><div class="a" style="left:5.20px;top:18.30px;font-size:1.6px;line-height:1;white-space:nowrap;color:#777;font-weight:400;">申請内容の正確性確保・不正支出防止・月次経費の適正管理が目的。</div><div class="a" style="left:54.30px;top:12.20px;width:47.80px;height:21.00px;background:#ffffff;box-shadow:inset 0 0 0 0.4px #7ea5c8,inset 0.7px 0 0 #2f76b8"></div><div class="a" style="left:55.90px;top:13.00px;width:0.70px;height:3.00px;background:#2f76b8;"></div><div class="a" style="left:57.30px;top:13.30px;font-size:1.8px;line-height:1;white-space:nowrap;color:#2f6fae;font-weight:700;">対象範囲・適用条件</div><div class="a" style="left:56.00px;top:16.40px;font-size:1.6px;line-height:1;white-space:nowrap;color:#777;font-weight:400;">・全正社員・契約社員</div><div class="a" style="left:56.00px;top:18.30px;font-size:1.6px;line-height:1;white-space:nowrap;color:#777;font-weight:400;">・1,000円以上の業務経費</div><div class="a" style="left:56.00px;top:20.20px;font-size:1.6px;line-height:1;white-space:nowrap;color:#777;font-weight:400;">・翌月5日までに申請</div><div class="a" style="left:3.50px;top:34.90px;width:32.00px;height:21.50px;background:#ffffff;border-top:1px solid #2f76b8;box-shadow:0 0.3px 0.8px rgba(0,0,0,.12)"></div><div class="a" style="left:4.80px;top:36.60px;font-size:1.7px;line-height:1;white-space:nowrap;color:#2f76b8;font-weight:700;">担当者・関係部門</div><div class="a" style="left:5.50px;top:39.80px;font-size:1.6px;line-height:1;white-space:nowrap;color:#777;font-weight:400;">申請者（経費精算者）</div><div class="a" style="left:5.50px;top:41.65px;font-size:1.6px;line-height:1;white-space:nowrap;color:#777;font-weight:400;">上長（承認者）</div><div class="a" style="left:5.50px;top:43.50px;font-size:1.6px;line-height:1;white-space:nowrap;color:#777;font-weight:400;">経理部（審査・処理）</div><div class="a" style="left:5.50px;top:45.35px;font-size:1.6px;line-height:1;white-space:nowrap;color:#777;font-weight:400;">総務部（問い合わせ）</div><div class="a" style="left:37.40px;top:34.90px;width:32.00px;height:21.50px;background:#ffffff;border-top:1px solid #13895b;box-shadow:0 0.3px 0.8px rgba(0,0,0,.12)"></div><div class="a" style="left:38.70px;top:36.60px;font-size:1.7px;line-height:1;white-space:nowrap;color:#13895b;font-weight:700;">所要時間の目安</div><div class="a" style="left:39.40px;top:39.80px;font-size:1.6px;line-height:1;white-space:nowrap;color:#777;font-weight:400;">申請準備〜提出：約30分</div><div class="a" style="left:39.40px;top:41.65px;font-size:1.6px;line-height:1;white-space:nowrap;color:#777;font-weight:400;">上長承認：1〜3営業日</div><div class="a" style="left:39.40px;top:43.50px;font-size:1.6px;line-height:1;white-space:nowrap;color:#777;font-weight:400;">経理処理：3〜5営業日</div><div class="a" style="left:71.40px;top:34.90px;width:32.00px;height:21.50px;background:#ffffff;border-top:1px solid #dc7a16;box-shadow:0 0.3px 0.8px rgba(0,0,0,.12)"></div><div class="a" style="left:72.70px;top:36.60px;font-size:1.7px;line-height:1;white-space:nowrap;color:#dc7a16;font-weight:700;">実施頻度</div><div class="a" style="left:73.40px;top:39.80px;font-size:1.6px;line-height:1;white-space:nowrap;color:#777;font-weight:400;">随時（経費発生のつど）</div><div class="a" style="left:73.40px;top:41.65px;font-size:1.6px;line-height:1;white-space:nowrap;color:#777;font-weight:400;">申請締切：翌月5日</div><div class="a" style="left:0.00px;top:57.20px;width:106.40px;height:2.80px;background:#1f3c64;"></div><div class="a" style="left:4.40px;top:57.60px;font-size:1.3px;line-height:1;white-space:nowrap;color:#8d9fba;font-weight:400;">© ペイズマネジメント　業務マニュアルサンプル | 経費精算業務（新入社員OJT）</div></div>
<div class="a" style="left:26.6px;top:362.4px;width:106.4px;height:59.6px;background:#1f3c64;border-radius:2.5px;overflow:hidden"><div class="a" style="left:0.00px;top:11.60px;width:106.40px;height:48.00px;background:#f2f4f8;"></div><div class="a" style="left:4.70px;top:1.90px;font-size:4px;line-height:1;white-space:nowrap;color:#ffffff;font-weight:700;">事前準備</div><div class="a" style="left:4.70px;top:7.40px;font-size:2px;line-height:1;white-space:nowrap;color:#8ea7c9;font-weight:400;">Preparation　必要書類の準備</div><div class="a" style="left:4.40px;top:12.80px;font-size:1.8px;line-height:1;white-space:nowrap;color:#5a6270;font-weight:400;">経費精算を開始する前に、以下の書類・システム・情報を準備してください。</div><div class="a" style="left:4.10px;top:16.50px;width:102.30px;height:3.00px;background:#1f3c64;"></div><div class="a" style="left:9.40px;top:17.20px;font-size:1.6px;line-height:1;white-space:nowrap;color:#ffffff;font-weight:700;">項目</div><div class="a" style="left:41.40px;top:17.20px;font-size:1.6px;line-height:1;white-space:nowrap;color:#ffffff;font-weight:700;">内容・詳細</div><div class="a" style="left:83.40px;top:17.20px;font-size:1.6px;line-height:1;white-space:nowrap;color:#ffffff;font-weight:700;">注意点・ポイント</div><div class="a" style="left:4.10px;top:19.50px;width:102.30px;height:10.40px;background:#ffffff;box-shadow:inset 0 -0.4px 0 #d8dee6"></div><div class="a" style="left:6.40px;top:23.00px;font-size:1.6px;line-height:1;white-space:nowrap;color:#6a7280;font-weight:400;">領収書・証憑</div><div class="a" style="left:24.40px;top:21.30px;font-size:1.6px;line-height:1;white-space:nowrap;color:#6a7280;font-weight:400;">申請に必要な原本または電子データを用意する</div><div class="a" style="left:24.40px;top:23.30px;font-size:1.6px;line-height:1;white-space:nowrap;color:#8a929e;font-weight:400;">日付・金額・支払先が明記されていること</div><div class="a" style="left:70.40px;top:21.30px;font-size:1.6px;line-height:1;white-space:nowrap;color:#8a929e;font-weight:400;">不明点は経理部へ問い合わせること</div><div class="a" style="left:4.10px;top:29.90px;width:102.30px;height:8.50px;background:#eef3fa;box-shadow:inset 0 -0.4px 0 #d8dee6"></div><div class="a" style="left:6.40px;top:33.40px;font-size:1.6px;line-height:1;white-space:nowrap;color:#6a7280;font-weight:400;">交通費の記録</div><div class="a" style="left:24.40px;top:31.70px;font-size:1.6px;line-height:1;white-space:nowrap;color:#6a7280;font-weight:400;">申請に必要な原本または電子データを用意する</div><div class="a" style="left:24.40px;top:33.70px;font-size:1.6px;line-height:1;white-space:nowrap;color:#8a929e;font-weight:400;">日付・金額・支払先が明記されていること</div><div class="a" style="left:70.40px;top:31.70px;font-size:1.6px;line-height:1;white-space:nowrap;color:#8a929e;font-weight:400;">不明点は経理部へ問い合わせること</div><div class="a" style="left:4.10px;top:38.40px;width:102.30px;height:8.50px;background:#ffffff;box-shadow:inset 0 -0.4px 0 #d8dee6"></div><div class="a" style="left:6.40px;top:41.90px;font-size:1.6px;line-height:1;white-space:nowrap;color:#6a7280;font-weight:400;">法人カード明細</div><div class="a" style="left:24.40px;top:40.20px;font-size:1.6px;line-height:1;white-space:nowrap;color:#6a7280;font-weight:400;">申請に必要な原本または電子データを用意する</div><div class="a" style="left:24.40px;top:42.20px;font-size:1.6px;line-height:1;white-space:nowrap;color:#8a929e;font-weight:400;">日付・金額・支払先が明記されていること</div><div class="a" style="left:70.40px;top:40.20px;font-size:1.6px;line-height:1;white-space:nowrap;color:#8a929e;font-weight:400;">不明点は経理部へ問い合わせること</div><div class="a" style="left:4.10px;top:46.90px;width:102.30px;height:10.40px;background:#eef3fa;box-shadow:inset 0 -0.4px 0 #d8dee6"></div><div class="a" style="left:6.40px;top:50.40px;font-size:1.6px;line-height:1;white-space:nowrap;color:#6a7280;font-weight:400;">経費精算システム</div><div class="a" style="left:24.40px;top:48.70px;font-size:1.6px;line-height:1;white-space:nowrap;color:#6a7280;font-weight:400;">申請に必要な原本または電子データを用意する</div><div class="a" style="left:24.40px;top:50.70px;font-size:1.6px;line-height:1;white-space:nowrap;color:#8a929e;font-weight:400;">日付・金額・支払先が明記されていること</div><div class="a" style="left:70.40px;top:48.70px;font-size:1.6px;line-height:1;white-space:nowrap;color:#8a929e;font-weight:400;">不明点は経理部へ問い合わせること</div><div class="a" style="left:4.30px;top:19.50px;width:0.70px;height:37.80px;background:linear-gradient(#3a7fc1,#1a9a66 40%,#e08a1e 70%,#7a3fd0);"></div><div class="a" style="left:22.40px;top:16.50px;width:0.40px;height:40.80px;background:#c8d0da;"></div><div class="a" style="left:68.60px;top:16.50px;width:0.40px;height:40.80px;background:#c8d0da;"></div><div class="a" style="left:0.00px;top:57.30px;width:106.40px;height:2.70px;background:#1f3c64;"></div></div>
<div class="a" style="left:26.6px;top:437.4px;width:106.4px;height:59.6px;background:#1f3c64;border-radius:2.5px;overflow:hidden"><div class="a" style="left:0.00px;top:11.00px;width:106.40px;height:49.00px;background:#f2f4f8;"></div><div class="a" style="left:4.70px;top:1.90px;font-size:4px;line-height:1;white-space:nowrap;color:#ffffff;font-weight:700;">業務手順（前半）</div><div class="a" style="left:4.70px;top:7.40px;font-size:2px;line-height:1;white-space:nowrap;color:#8ea7c9;font-weight:400;">Procedure Part 1　経費発生〜申請</div><div class="a" style="left:4.10px;top:12.20px;width:98.60px;height:4.90px;background:#ffffff;box-shadow:inset 0 0 0 0.4px #8aa8c8"></div><div class="a" style="left:5.40px;top:13.70px;font-size:1.7px;line-height:1;white-space:nowrap;color:#6a7280;font-weight:400;">STEP 1〜3：経費発生から申請書の作成・提出までの手順</div><div class="a" style="left:4.10px;top:18.10px;width:98.60px;height:3.20px;background:#1f3c64;"></div><div class="a" style="left:9.40px;top:18.90px;font-size:1.6px;line-height:1;white-space:nowrap;color:#ffffff;font-weight:700;">手順</div><div class="a" style="left:41.40px;top:18.90px;font-size:1.6px;line-height:1;white-space:nowrap;color:#ffffff;font-weight:700;">作業内容・詳細</div><div class="a" style="left:77.40px;top:18.90px;font-size:1.6px;line-height:1;white-space:nowrap;color:#ffffff;font-weight:700;">注意点</div><div class="a" style="left:97.40px;top:18.90px;font-size:1.6px;line-height:1;white-space:nowrap;color:#ffffff;font-weight:700;">担当</div><div class="a" style="left:4.10px;top:21.30px;width:98.60px;height:11.60px;background:#ffffff;box-shadow:inset 0 -0.4px 0 #d8dee6"></div><div class="a" style="left:4.70px;top:25.10px;width:3.60px;height:3.60px;background:#3a7fc1;border-radius:50%"></div><div class="a" style="left:8.90px;top:24.80px;font-size:1.6px;line-height:1;white-space:nowrap;color:#4a5260;font-weight:700;">経費の発生</div><div class="a" style="left:26.40px;top:22.90px;font-size:1.6px;line-height:1;white-space:nowrap;color:#7a828e;font-weight:400;">領収書を受け取り、日付・金額・支払先を確認する。</div><div class="a" style="left:70.40px;top:22.90px;font-size:1.6px;line-height:1;white-space:nowrap;color:#8a929e;font-weight:400;">金額に誤りがないか確認</div><div class="a" style="left:26.40px;top:24.90px;font-size:1.6px;line-height:1;white-space:nowrap;color:#7a828e;font-weight:400;">領収書を受け取り、日付・金額・支払先を確認する。</div><div class="a" style="left:70.40px;top:24.90px;font-size:1.6px;line-height:1;white-space:nowrap;color:#8a929e;font-weight:400;">金額に誤りがないか確認</div><div class="a" style="left:26.40px;top:26.90px;font-size:1.6px;line-height:1;white-space:nowrap;color:#7a828e;font-weight:400;">領収書を受け取り、日付・金額・支払先を確認する。</div><div class="a" style="left:70.40px;top:26.90px;font-size:1.6px;line-height:1;white-space:nowrap;color:#8a929e;font-weight:400;">金額に誤りがないか確認</div><div class="a" style="left:96.90px;top:25.80px;font-size:1.6px;line-height:1;white-space:nowrap;color:#7a828e;font-weight:400;">申請者</div><div class="a" style="left:4.10px;top:32.90px;width:98.60px;height:11.00px;background:#eef3fa;box-shadow:inset 0 -0.4px 0 #d8dee6"></div><div class="a" style="left:4.70px;top:36.70px;width:3.60px;height:3.60px;background:#2a5fa0;border-radius:50%"></div><div class="a" style="left:8.90px;top:36.40px;font-size:1.6px;line-height:1;white-space:nowrap;color:#4a5260;font-weight:700;">申請書作成</div><div class="a" style="left:26.40px;top:34.50px;font-size:1.6px;line-height:1;white-space:nowrap;color:#7a828e;font-weight:400;">領収書を受け取り、日付・金額・支払先を確認する。</div><div class="a" style="left:70.40px;top:34.50px;font-size:1.6px;line-height:1;white-space:nowrap;color:#8a929e;font-weight:400;">金額に誤りがないか確認</div><div class="a" style="left:26.40px;top:36.50px;font-size:1.6px;line-height:1;white-space:nowrap;color:#7a828e;font-weight:400;">領収書を受け取り、日付・金額・支払先を確認する。</div><div class="a" style="left:70.40px;top:36.50px;font-size:1.6px;line-height:1;white-space:nowrap;color:#8a929e;font-weight:400;">金額に誤りがないか確認</div><div class="a" style="left:26.40px;top:38.50px;font-size:1.6px;line-height:1;white-space:nowrap;color:#7a828e;font-weight:400;">領収書を受け取り、日付・金額・支払先を確認する。</div><div class="a" style="left:70.40px;top:38.50px;font-size:1.6px;line-height:1;white-space:nowrap;color:#8a929e;font-weight:400;">金額に誤りがないか確認</div><div class="a" style="left:96.90px;top:37.40px;font-size:1.6px;line-height:1;white-space:nowrap;color:#7a828e;font-weight:400;">申請者</div><div class="a" style="left:4.10px;top:43.90px;width:98.60px;height:10.70px;background:#ffffff;box-shadow:inset 0 -0.4px 0 #d8dee6"></div><div class="a" style="left:4.70px;top:47.70px;width:3.60px;height:3.60px;background:#1a9a66;border-radius:50%"></div><div class="a" style="left:8.90px;top:47.40px;font-size:1.6px;line-height:1;white-space:nowrap;color:#4a5260;font-weight:700;">証憑の添付</div><div class="a" style="left:26.40px;top:45.50px;font-size:1.6px;line-height:1;white-space:nowrap;color:#7a828e;font-weight:400;">領収書を受け取り、日付・金額・支払先を確認する。</div><div class="a" style="left:70.40px;top:45.50px;font-size:1.6px;line-height:1;white-space:nowrap;color:#8a929e;font-weight:400;">金額に誤りがないか確認</div><div class="a" style="left:26.40px;top:47.50px;font-size:1.6px;line-height:1;white-space:nowrap;color:#7a828e;font-weight:400;">領収書を受け取り、日付・金額・支払先を確認する。</div><div class="a" style="left:70.40px;top:47.50px;font-size:1.6px;line-height:1;white-space:nowrap;color:#8a929e;font-weight:400;">金額に誤りがないか確認</div><div class="a" style="left:26.40px;top:49.50px;font-size:1.6px;line-height:1;white-space:nowrap;color:#7a828e;font-weight:400;">領収書を受け取り、日付・金額・支払先を確認する。</div><div class="a" style="left:70.40px;top:49.50px;font-size:1.6px;line-height:1;white-space:nowrap;color:#8a929e;font-weight:400;">金額に誤りがないか確認</div><div class="a" style="left:96.90px;top:48.40px;font-size:1.6px;line-height:1;white-space:nowrap;color:#7a828e;font-weight:400;">申請者</div><div class="a" style="left:25.40px;top:18.10px;width:0.40px;height:36.50px;background:#c8d0da;"></div><div class="a" style="left:69.80px;top:18.10px;width:0.40px;height:36.50px;background:#c8d0da;"></div><div class="a" style="left:96.00px;top:18.10px;width:0.40px;height:36.50px;background:#c8d0da;"></div><div class="a" style="left:0.00px;top:56.60px;width:106.40px;height:3.00px;background:#1f3c64;"></div></div>
<div class="a" style="left:26.6px;top:512.1px;width:106.4px;height:14px;background:#1f3c64;border-radius:2.5px;overflow:hidden"><div class="a" style="left:4.50px;top:1.90px;font-size:4px;line-height:1;white-space:nowrap;color:#ffffff;font-weight:700;">業務手順（後半）・例外対応</div><div class="a" style="left:4.50px;top:7.50px;font-size:1.9px;line-height:1;white-space:nowrap;color:#8ea7c9;font-weight:400;">Procedure Part 2　承認〜精算・例外対応</div><div class="a" style="left:0.00px;top:12.00px;width:106.40px;height:10.00px;background:#f2f4f8;"></div></div>
<div class="a" style="left:279.2px;top:128.8px;width:22.5px;height:22.9px;border:1px solid #505050;border-radius:5px;background:#1c1c1c"></div>
<svg class="a" style="left:283px;top:132.5px" width="15" height="15" viewBox="0 0 15 15" fill="none"><path d="M8 2.5l1 2.6 2.6 1-2.6 1-1 2.6-1-2.6-2.6-1 2.6-1z" fill="#f0f0f0"/><path d="M11.3 7.6l0.6 1.4 1.4 0.6-1.4 0.6-0.6 1.4-0.6-1.4-1.4-0.6 1.4-0.6z" fill="#f0f0f0"/><path d="M2.5 12.5l2.5-2.5M4.5 13l2-2M2.8 9.8l1.6-1.6" stroke="#d0d0d0" stroke-width="0.9"/></svg>
<div class="a" style="left:278px;top:156px;width:617.5px;height:347px;background:#f4f6fa"></div>
<div class="a" style="left:278px;top:156px;width:617.5px;height:66px;background:#1f3c64;"></div>
<div class="m" style="left:304.00px;top:167.70px;color:#ffffff;font-size:20.5px;font-weight:700;-webkit-text-stroke:0.25px #ffffff;transform:scaleX(1.0488);">業務の全体像</div>
<div class="m" style="left:303.54px;top:202.40px;color:#98b0d0;font-size:10.6px;font-weight:400;transform:scaleX(0.9551);">Business Overview</div>
<div class="a" style="left:297px;top:227.3px;width:278px;height:120.5px;background:#fff;border:1px solid #8aa4bc;border-left:3.8px solid #2f76b8"></div>
<div class="a" style="left:306.3px;top:232px;width:4.2px;height:17.3px;background:#2f76b8;"></div>
<div class="a" style="left:593px;top:227.3px;width:278px;height:120.5px;background:#fff;border:1px solid #8aa4bc;border-left:3.8px solid #2f76b8"></div>
<div class="a" style="left:602.3px;top:232px;width:4.2px;height:17.3px;background:#2f76b8;"></div>
<div class="m" style="left:314.50px;top:235.80px;color:#2f72b2;font-size:10.3px;font-weight:700;-webkit-text-stroke:0.25px #2f72b2;transform:scaleX(1.0220);">業務の目的</div>
<div class="m" style="left:610.50px;top:236.00px;color:#2f72b2;font-size:10.3px;font-weight:700;-webkit-text-stroke:0.25px #2f72b2;transform:scaleX(1.0167);">対象範囲・適用条件</div>
<div class="m" style="left:307.50px;top:256.60px;color:#474747;font-size:9.3px;font-weight:400;-webkit-text-stroke:0.08px #474747;transform:scaleX(0.9937);">社員が業務遂行中に支出した費用を会社に申請・精算する手続</div>
<div class="m" style="left:305.50px;top:267.20px;color:#474747;font-size:9.3px;font-weight:400;-webkit-text-stroke:0.08px #474747;">き。</div>
<div class="m" style="left:306.50px;top:280.00px;color:#474747;font-size:9.3px;font-weight:400;-webkit-text-stroke:0.08px #474747;">申請内容の正確性確保・不正支出防止・月次経費の適正管理が</div>
<div class="m" style="left:306.50px;top:289.80px;color:#474747;font-size:9.3px;font-weight:400;-webkit-text-stroke:0.08px #474747;">目的。</div>
<div class="m" style="left:602.32px;top:257.50px;color:#474747;font-size:9.3px;font-weight:400;-webkit-text-stroke:0.08px #474747;transform:scaleX(0.9942);">・全正社員・契約社員</div>
<div class="m" style="left:602.18px;top:268.60px;color:#474747;font-size:9.3px;font-weight:400;-webkit-text-stroke:0.08px #474747;transform:scaleX(1.0293);">・1,000円以上の業務経費</div>
<div class="m" style="left:602.26px;top:279.00px;color:#474747;font-size:9.3px;font-weight:400;-webkit-text-stroke:0.08px #474747;transform:scaleX(1.0111);">・翌月5日までに申請</div>
<div class="a" style="left:297px;top:359.6px;width:185.5px;height:114.6px;background:#fff;border-top:5.5px solid #2f76b8;box-shadow:0 1px 4px rgba(0,0,0,.12)"></div>
<div class="a" style="left:494.4px;top:359.6px;width:185.6px;height:114.6px;background:#fff;border-top:5.5px solid #13895b;box-shadow:0 1px 4px rgba(0,0,0,.12)"></div>
<div class="a" style="left:691.4px;top:359.6px;width:185.6px;height:114.6px;background:#fff;border-top:5.5px solid #dc7a16;box-shadow:0 1px 4px rgba(0,0,0,.12)"></div>
<div class="m" style="left:304.50px;top:370.80px;color:#3276b6;font-size:9.3px;font-weight:700;transform:scaleX(1.0493);">担当者・関係部門</div>
<div class="m" style="left:501.20px;top:371.10px;color:#1a8e60;font-size:9.3px;font-weight:700;transform:scaleX(1.0317);">所要時間の目安</div>
<div class="m" style="left:698.20px;top:372.10px;color:#d87c1c;font-size:9.3px;font-weight:700;transform:scaleX(1.0361);">実施頻度</div>
<div class="m" style="left:307.83px;top:392.80px;color:#474747;font-size:8.8px;font-weight:400;-webkit-text-stroke:0.08px #474747;transform:scaleX(0.9675);">申請者（経費精算者）</div>
<div class="m" style="left:307.81px;top:402.50px;color:#474747;font-size:8.8px;font-weight:400;-webkit-text-stroke:0.08px #474747;transform:scaleX(0.9857);">上長（承認者）</div>
<div class="m" style="left:308.80px;top:412.80px;color:#474747;font-size:8.8px;font-weight:400;-webkit-text-stroke:0.08px #474747;transform:scaleX(0.9560);">経理部（審査・処理）</div>
<div class="m" style="left:308.80px;top:423.10px;color:#474747;font-size:8.8px;font-weight:400;-webkit-text-stroke:0.08px #474747;transform:scaleX(0.9560);">総務部（問い合わせ）</div>
<div class="m" style="left:505.13px;top:392.50px;color:#474747;font-size:8.8px;font-weight:400;-webkit-text-stroke:0.08px #474747;transform:scaleX(0.9684);">申請準備〜提出：約30分</div>
<div class="m" style="left:505.13px;top:402.70px;color:#474747;font-size:8.8px;font-weight:400;-webkit-text-stroke:0.08px #474747;transform:scaleX(0.9674);">上長承認：1〜3営業日</div>
<div class="m" style="left:506.10px;top:412.60px;color:#474747;font-size:8.8px;font-weight:400;-webkit-text-stroke:0.08px #474747;transform:scaleX(0.9567);">経理処理：3〜5営業日</div>
<div class="m" style="left:703.10px;top:392.10px;color:#474747;font-size:8.8px;font-weight:400;-webkit-text-stroke:0.08px #474747;transform:scaleX(0.9505);">随時（経費発生のつど）</div>
<div class="m" style="left:702.14px;top:402.10px;color:#474747;font-size:8.8px;font-weight:400;-webkit-text-stroke:0.08px #474747;transform:scaleX(0.9640);">申請締切：翌月5日</div>
<div class="a" style="left:278px;top:489.3px;width:617.5px;height:14.2px;background:#1f3c64;"></div>
<div class="a" style="left:278px;top:503.5px;width:617.5px;height:1px;background:#050a12;"></div>
<div class="m" style="left:296.90px;top:493.20px;color:#8d9fba;font-size:7.4px;font-weight:400;-webkit-text-stroke:0.1px #8d9fba;">© ペイズマネジメント　業務マニュアルサンプル | 経費精算業務（新入社員OJT）</div>
<div class="a" style="left:0px;top:523px;width:1024px;height:1.5px;background:#060606;"></div>
<div class="a" style="left:0px;top:525.5px;width:1024px;height:16.5px;background:#181818;"></div>
<div class="a" style="left:0px;top:525.5px;width:1024px;height:1.2px;background:#262626;"></div>
<div class="a" style="left:1012px;top:127px;width:12px;height:399px;background:#161616;"></div>
<svg class="a" style="left:1014.5px;top:128px" width="7" height="5" viewBox="0 0 7 5" fill="none"><path d="M0.3 4.7L3.5 0.3 6.7 4.7z" fill="#a8a8a8"/></svg>
<div class="a" style="left:1014.7px;top:221.3px;width:6.7px;height:42px;border-radius:3.4px;background:#a6a6a6"></div>
<svg class="a" style="left:1014.5px;top:480.5px" width="7" height="4" viewBox="0 0 7 4" fill="none"><path d="M0.3 0.3L3.5 3.7 6.7 0.3z" fill="#a8a8a8"/></svg>
<svg class="a" style="left:1014.5px;top:489px" width="7" height="10" viewBox="0 0 7 10" fill="none"><path d="M0.3 4.5L3.5 0.5 6.7 4.5zM0.3 9.5L3.5 5.5 6.7 9.5z" fill="#a8a8a8"/></svg>
<svg class="a" style="left:1014.5px;top:501px" width="7" height="10" viewBox="0 0 7 10" fill="none"><path d="M0.3 0.5L3.5 4.5 6.7 0.5zM0.3 5.5L3.5 9.5 6.7 5.5z" fill="#a8a8a8"/></svg>
<div class="m" style="left:7.07px;top:531.30px;color:#d0d0d0;font-size:9.3px;font-weight:400;-webkit-text-stroke:0.2px #d0d0d0;transform:scaleX(0.8260);">スライド 3/8</div>
<div class="m" style="left:71.46px;top:531.30px;color:#d0d0d0;font-size:9.3px;font-weight:400;-webkit-text-stroke:0.2px #d0d0d0;transform:scaleX(0.9360);">日本語</div>
<svg class="a" style="left:108.5px;top:529.5px" width="11" height="11" viewBox="0 0 11 11" fill="none"><path d="M5.5 0.8l1.4 3 3.2 0.4-2.4 2.2 0.6 3.2-2.8-1.6-2.8 1.6 0.6-3.2L0.9 4.2l3.2-0.4z" stroke="#d0d0d0" stroke-width="0.9"/><circle cx="5.5" cy="5.5" r="1.2" fill="#d0d0d0"/></svg>
<div class="m" style="left:119.67px;top:532.30px;color:#e8e8e8;font-size:9.2px;font-weight:400;-webkit-text-stroke:0.45px #e8e8e8;transform:scaleX(0.8283);">アクセシビリティ: 検討が必要です</div>
<svg class="a" style="left:666.5px;top:528px" width="12" height="14" viewBox="0 0 12 14" fill="none"><path d="M3.8 3.2L6 1.2l2.2 2" stroke="#d0d0d0" stroke-width="0.9"/><path d="M0.5 5.5h11M0.5 8.5h11M0.5 11.5h11" stroke="#c8c8c8" stroke-width="1"/></svg>
<div class="m" style="left:678.67px;top:530.50px;color:#d0d0d0;font-size:9px;font-weight:400;-webkit-text-stroke:0.15px #d0d0d0;transform:scaleX(0.7652);">ノート</div>
<svg class="a" style="left:709px;top:529.5px" width="11" height="10" viewBox="0 0 11 10" fill="none"><rect x="0.5" y="0.5" width="10" height="6.5" stroke="#c8c8c8" stroke-width="0.9"/><path d="M4 9.5h3M5.5 7v2.5" stroke="#c8c8c8" stroke-width="0.9"/><circle cx="7.5" cy="6.5" r="2" fill="#c8c8c8"/></svg>
<div class="m" style="left:719.59px;top:531.50px;color:#d0d0d0;font-size:9px;font-weight:400;-webkit-text-stroke:0.15px #d0d0d0;transform:scaleX(1.0118);">表示設定</div>
<div class="a" style="left:768px;top:526.5px;width:29px;height:15.5px;background:#2e2e2e;"></div>
<svg class="a" style="left:776.5px;top:529px" width="11" height="10" viewBox="0 0 11 10" fill="none"><rect x="0.5" y="0.5" width="10" height="9" stroke="#d0d0d0" stroke-width="0.9"/><rect x="2.5" y="2.5" width="6" height="4" stroke="#d0d0d0" stroke-width="0.8"/></svg>
<svg class="a" style="left:805px;top:529px" width="11" height="10" viewBox="0 0 11 10" fill="none"><rect x="0.5" y="0.5" width="4" height="3.5" stroke="#c8c8c8" stroke-width="0.9"/><rect x="6.5" y="0.5" width="4" height="3.5" stroke="#c8c8c8" stroke-width="0.9"/><rect x="0.5" y="6" width="4" height="3.5" stroke="#c8c8c8" stroke-width="0.9"/><rect x="6.5" y="6" width="4" height="3.5" stroke="#c8c8c8" stroke-width="0.9"/></svg>
<svg class="a" style="left:833px;top:529px" width="10" height="10" viewBox="0 0 10 10" fill="none"><path d="M0.5 1.5q2.5-1 4.5 0.5 2-1.5 4.5-0.5v8q-2.5-1-4.5 0.5-2-1.5-4.5-0.5z" fill="#9a9a9a" stroke="#c8c8c8" stroke-width="0.7"/></svg>
<svg class="a" style="left:860.5px;top:529px" width="11" height="10" viewBox="0 0 11 10" fill="none"><rect x="0.5" y="0.5" width="10" height="6" stroke="#c8c8c8" stroke-width="0.9"/><rect x="3" y="2" width="5" height="3" fill="#c8c8c8"/><path d="M5.5 6.5v2.5M3.5 9.5h4" stroke="#c8c8c8" stroke-width="0.9"/></svg>
<div class="a" style="left:884.7px;top:534px;width:5px;height:1px;background:#9a9a9a;"></div>
<div class="a" style="left:893.7px;top:534px;width:69.7px;height:1px;background:#a0a0a0;"></div>
<div class="a" style="left:923.6px;top:530px;width:6px;height:8.3px;border-radius:1px;background:#c0c0c0"></div>
<div class="a" style="left:967.4px;top:534px;width:5px;height:1px;background:#9a9a9a;"></div>
<div class="a" style="left:969.4px;top:532px;width:1px;height:5px;background:#9a9a9a;"></div>
<div class="m" style="left:981.40px;top:529.60px;color:#d0d0d0;font-size:9.8px;font-weight:400;-webkit-text-stroke:0.38px #d0d0d0;transform:scaleX(0.9450);">92%</div>
<svg class="a" style="left:1010px;top:529px" width="12" height="12" viewBox="0 0 12 12" fill="none"><path d="M6 0.5l2 2H4zM6 11.5l2-2H4zM0.5 6l2-2v4zM11.5 6l-2-2v4z" fill="#c8c8c8"/><rect x="3.5" y="3.5" width="5" height="5" stroke="#c8c8c8" stroke-width="0.9"/></svg>
</body></html>
